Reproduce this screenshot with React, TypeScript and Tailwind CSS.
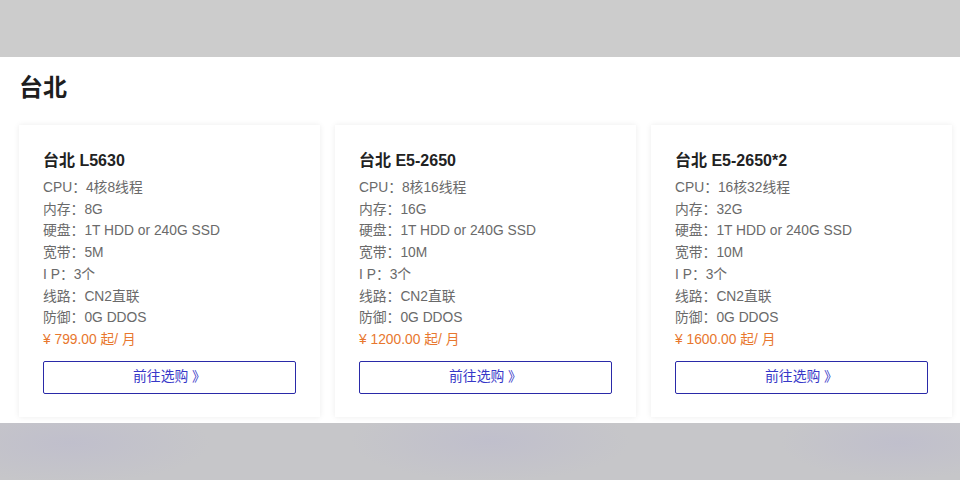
import React from 'react';

type Plan = {
  name: string;
  cpu: string;
  ram: string;
  bandwidth: string;
  price: string;
};

const plans: Plan[] = [
  { name: '台北 L5630', cpu: '4核8线程', ram: '8G', bandwidth: '5M', price: '799.00' },
  { name: '台北 E5-2650', cpu: '8核16线程', ram: '16G', bandwidth: '10M', price: '1200.00' },
  { name: '台北 E5-2650*2', cpu: '16核32线程', ram: '32G', bandwidth: '10M', price: '1600.00' },
];

const PlanCard: React.FC<{ plan: Plan }> = ({ plan }) => {
  const specs = [
    ['CPU', plan.cpu],
    ['内存', plan.ram],
    ['硬盘', '1T HDD or 240G SSD'],
    ['宽带', plan.bandwidth],
    ['I P', '3个'],
    ['线路', 'CN2直联'],
    ['防御', '0G DDOS'],
  ];

  return (
    <div className="bg-white px-6 pt-[25px] pb-[23px] shadow-[0_0_6px_rgba(0,0,0,0.08)]">
      <h3 className="text-[16px] leading-[22px] font-bold text-[#222] mb-[5px]">{plan.name}</h3>
      <div className="text-[13.8px] leading-[21.7px] text-[#6a6a6a]">
        {specs.map(([label, value]) => (
          <p key={label}>
            {label}：{value}
          </p>
        ))}
        <p className="text-[#e8772e]">¥ {plan.price} 起/ 月</p>
      </div>
      {/* Buy button */}
      <button className="mt-[10px] w-full h-[33px] border border-[#2a2aa8] rounded-[2px] text-[13.8px] text-[#3737c8] bg-white">
        前往选购 》
      </button>
    </div>
  );
};

export default function App() {
  return (
    <div
      className="w-[960px] h-[480px] flex flex-col overflow-hidden"
      style={{ fontFamily: '"Liberation Sans", "Noto Sans CJK SC", sans-serif' }}
    >
      {/* Top backdrop */}
      <div className="h-[57px] bg-[#cccccc]"></div>

      {/* Region panel */}
      <div className="h-[366px] bg-white pl-[19px] pr-[8px] pt-[15px]">
        <h2 className="text-[24px] leading-[32px] font-bold text-[#1e1e1e]">台北</h2>
        <div className="grid grid-cols-3 gap-[15px] mt-[21px]">
          {plans.map((p) => (
            <PlanCard key={p.name} plan={p} />
          ))}
        </div>
      </div>

      {/* Bottom backdrop */}
      <div className="flex-1 bg-[#c6c6c9] bg-[radial-gradient(140px_40px_at_70px_20px,#c0bfcc,transparent),radial-gradient(140px_40px_at_490px_18px,#c0bfcc,transparent),radial-gradient(120px_36px_at_900px_20px,#c0bfcc,transparent)]"></div>
    </div>
  );
}
